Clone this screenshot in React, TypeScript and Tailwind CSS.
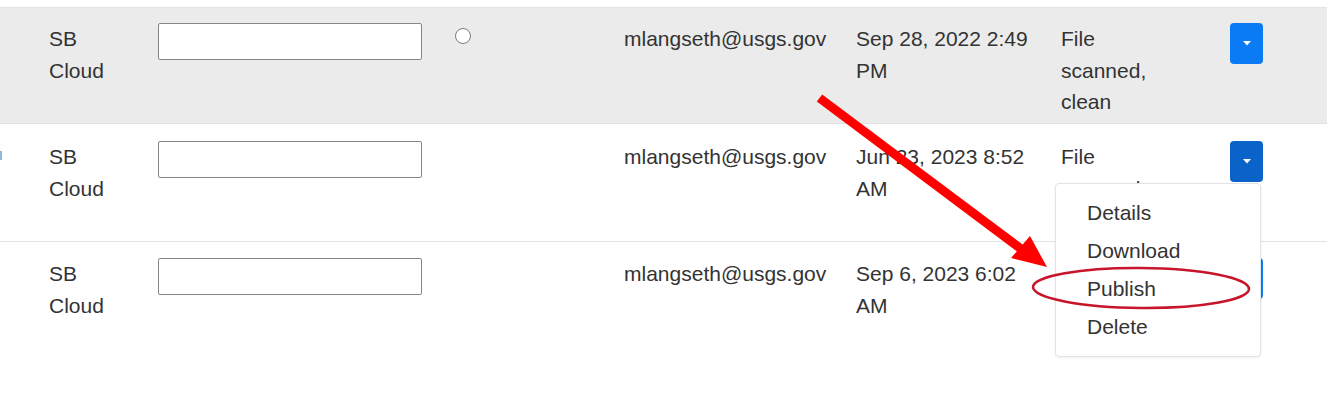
import React from "react";

type Row = {
  bg: string;
  pad: string;
  h: string;
  date: string;
  radio?: boolean;
  mark?: boolean;
  active?: boolean;
  menu?: boolean;
};

const rows: Row[] = [
  { bg: "bg-[#ebebeb]", pad: "pt-[15px]", h: "h-[116px]", date: "Sep 28, 2022 2:49 PM", radio: true },
  { bg: "bg-white", pad: "pt-[17px]", h: "h-[118px]", date: "Jun 23, 2023 8:52 AM", mark: true, active: true, menu: true },
  { bg: "bg-white", pad: "pt-[16px]", h: "h-[169px]", date: "Sep 6, 2023 6:02 AM" },
];

const menuItems = ["Details", "Download", "Publish", "Delete"];

function Caret() {
  return (
    <svg width="8" height="5" viewBox="0 0 8 5">
      <path d="M0 0 L8 0 L4 4.5 Z" fill="#fff" />
    </svg>
  );
}

function FileRow({ row }: { row: Row }) {
  return (
    <div className={`flex border-t border-[#e2e2e2] ${row.bg} ${row.pad} ${row.h}`}>
      {/* cut-off select column */}
      <div className="w-[49px] shrink-0">
        {row.mark && <div className="w-[2px] h-[9px] mt-[10px] bg-[#8fb8e0]" />}
      </div>

      <div className="w-[109px] shrink-0">
        <div className="w-[60px]">SB Cloud</div>
      </div>

      <div className="w-[297px] shrink-0">
        <input
          type="text"
          className="w-[264px] h-[37px] bg-white border border-[#868686] rounded-[2px] outline-none"
        />
      </div>

      <div className="w-[169px] shrink-0">
        {row.radio && (
          <div className="w-[16px] h-[16px] mt-[5px] rounded-full border border-[#7a7a7a] bg-white" />
        )}
      </div>

      <div className="w-[232px] shrink-0">mlangseth@usgs.gov</div>

      <div className="w-[205px] shrink-0">
        <div className="w-[180px]">{row.date}</div>
      </div>

      <div className="w-[169px] shrink-0">
        <div className="w-[90px]">File scanned, clean</div>
      </div>

      {/* actions */}
      <div className="relative shrink-0">
        <button
          className={`w-[33px] h-[41px] rounded-[4px] flex items-center justify-center ${
            row.active ? "bg-[#0a63c9]" : "bg-[#0b7bf5]"
          }`}
        >
          <Caret />
        </button>
        {row.menu && (
          <div className="absolute z-10 left-[-175px] top-[42px] w-[206px] py-[10px] bg-white border border-[#e3e3e3] rounded-[4px] shadow-[0_1px_3px_rgba(0,0,0,0.06)]">
            {menuItems.map((item) => (
              <div key={item} className="px-[31px] py-[3.25px] whitespace-nowrap">
                {item}
              </div>
            ))}
          </div>
        )}
      </div>
    </div>
  );
}

export default function App() {
  return (
    <div className="relative w-[1327px] h-[410px] overflow-hidden bg-white text-[#333] text-[21px] leading-[31.5px] font-['Liberation_Sans',Arial,sans-serif]">
      <div className="h-[7px]" />
      {rows.map((row, i) => (
        <FileRow key={i} row={row} />
      ))}

      {/* annotation */}
      <svg className="absolute inset-0 z-20 pointer-events-none" width="1327" height="410">
        <line x1="819.5" y1="98" x2="1024" y2="251" stroke="#ff0000" strokeWidth="9" />
        <polygon points="1047,267 1030,236 1011,258" fill="#ff0000" />
        <ellipse cx="1141" cy="288" rx="108" ry="20" fill="none" stroke="#c8152b" strokeWidth="2.5" transform="rotate(0.5 1141 288)" />
      </svg>
    </div>
  );
}
